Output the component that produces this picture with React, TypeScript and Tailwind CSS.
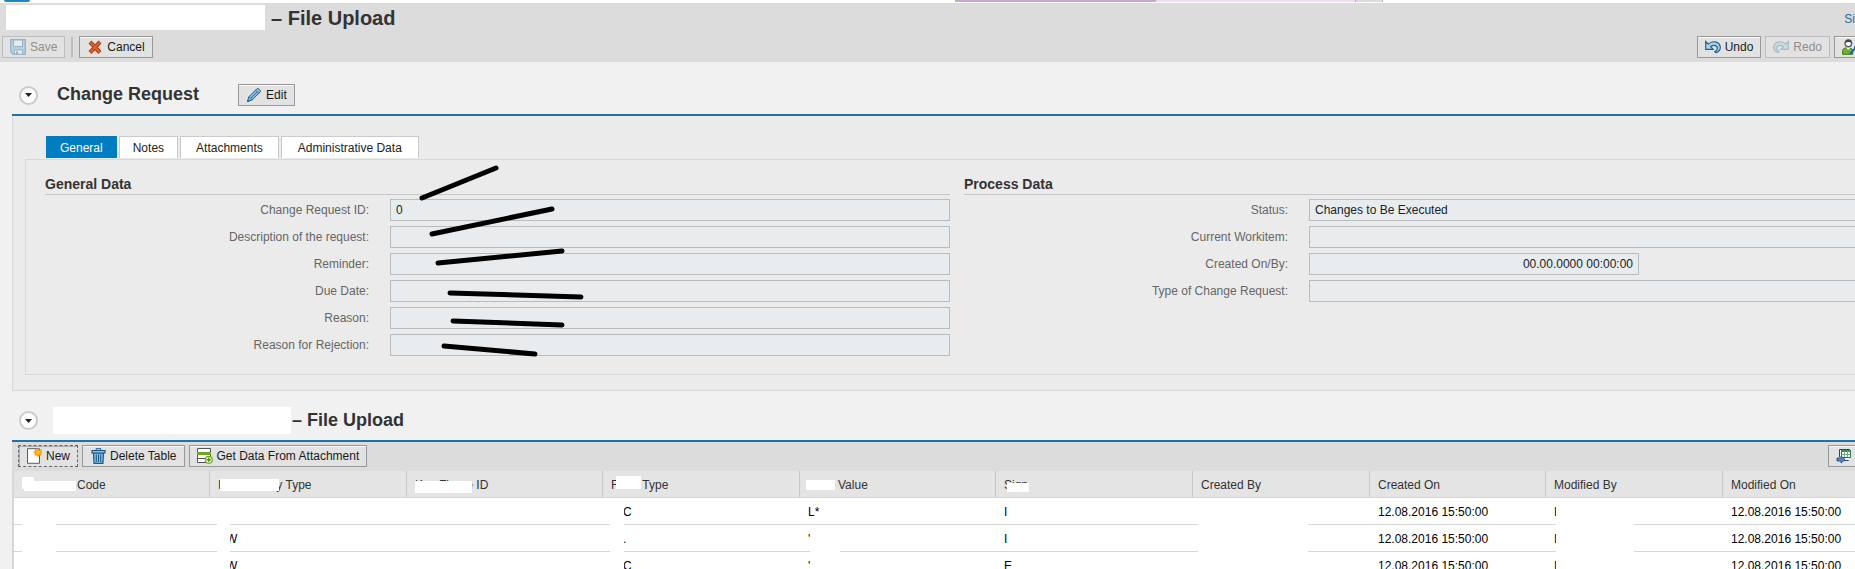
import React from "react";

type IconProps = { children: React.ReactNode };

function Icon({ children }: IconProps) {
  return (
    <svg width="16" height="16" viewBox="0 0 16 16" fill="none" aria-hidden="true" className="shrink-0">
      {children}
    </svg>
  );
}

const SaveIcon = () => (
  <Icon>
    <path d="M.7.7h14.6v14.600H3.200L.7 12.800z" fill="#bccfdb" stroke="#93b3c8" strokeWidth="1.300" />
    <path d="M3.500 1h9v6.500h-9z" fill="#e6eaec" stroke="#93b3c8" />
    <path d="M4.500 11h8v4.300h-8z" fill="#e6eaec" stroke="#93b3c8" />
    <path d="M6 12.500h2V15H6z" fill="#93b3c8" />
  </Icon>
);

const CancelIcon = () => (
  <Icon>
    <path d="M3 3l10 10.500M13 3L3 13.500" stroke="#a93c16" strokeWidth="4" />
    <path d="M3 3l10 10.500M13 3L3 13.500" stroke="#d9602f" strokeWidth="2" />
  </Icon>
);

const EditIcon = () => (
  <Icon>
    <path d="M1.500 14.500l1.300-4.600L11 1.700c1-1 4.300 2 3.300 3.200L6 13z" fill="#8dbbdb" stroke="#1e5f8e" />
    <path d="M9.500 3.200l3.300 3.300M3 9.800L6.200 13M5 11l6-6" stroke="#1e5f8e" strokeWidth=".8" />
    <path d="M1 15l.8-2.600 1.800 1.800z" fill="#1e5f8e" />
  </Icon>
);

const UndoIcon = () => (
  <Icon>
    <path d="M.7 2.500v7.800h7.500L5.700 7.600c3-2.300 7-.8 6.700 1.900-.1 1.500-1.100 2.500-2.500 3.100l1.200 1.100c2.700-.9 4.200-2.700 4.200-5.200C15.300 3.200 8 .6 3.300 5.100z" fill="#b5d2e6" stroke="#1c628f" strokeWidth="1.200" />
  </Icon>
);

const RedoIcon = () => (
  <Icon>
    <path d="M15.300 2.500v7.800H7.800l2.500-2.700c-3-2.300-7-.8-6.700 1.900.1 1.500 1.100 2.500 2.500 3.100l-1.200 1.100C2.200 12.800.7 11 .7 8.500.7 3.200 8 .6 12.700 5.100z" fill="#cddae2" stroke="#a3bccb" strokeWidth="1.200" />
  </Icon>
);

const PersonIcon = () => (
  <Icon>
    <path d="M.6 15.300v-3.500C.6 9.500 3 8.700 5.500 8.700s5.200.8 5.200 3.100v3.500z" fill="#6fb22c" stroke="#3f7d12" />
    <path d="M3.800 8.500l2.500 2.200L8.700 8.500z" fill="#fff" />
    <circle cx="6.300" cy="4.300" r="3.300" fill="#fff" stroke="#555" strokeWidth="1.300" />
    <path d="M3 4C3.300-.3 9.300-.3 9.600 4 7.500 2.600 5.500 2.600 3 4z" fill="#444" />
    <path d="M8 15l5-5.500c-.3-2 1-3 3-2.500" stroke="#1d6ba0" strokeWidth="2" />
  </Icon>
);

const NewIcon = () => (
  <Icon>
    <path d="M1.500.7h12v14.600h-12z" fill="#fff" stroke="#5c5c5c" />
    <path d="M12 0l1.300 1.700 2.200-.6-.3 2.200 1.800 1.300-1.800 1 .3 2.200-2.200-.4L12 9.200l-1.300-1.800-2.200.4.300-2.200L7 4.600l1.800-1.300-.3-2.200 2.200.6z" fill="#f7a30a" />
    <circle cx="12" cy="4.500" r="1.800" fill="#fcc642" />
  </Icon>
);

const TrashIcon = () => (
  <Icon>
    <path d="M3.500 5h10l-.6 10.400H4.100z" fill="#8cc0e2" stroke="#15578a" strokeWidth="1.200" />
    <path d="M2 2.500h13V5H2z" fill="#8cc0e2" stroke="#15578a" strokeWidth="1.200" />
    <path d="M6.200 2V.7h4.600V2M6.300 6.500V14M8.500 6.500V14M10.700 6.500V14" stroke="#15578a" />
  </Icon>
);

const AttachmentDataIcon = () => (
  <Icon>
    <path d="M.5.500h13v14H.500z" fill="#fff" stroke="#555" />
    <path d="M0 4h14v3H0z" fill="#6fa51f" />
    <path d="M0 10.500h8" stroke="#555" />
    <circle cx="11.800" cy="11.800" r="3.500" fill="#fff" stroke="#6fa51f" strokeWidth="1.200" />
    <path d="M11.800 9.500v4.600M9.500 11.800h4.600" stroke="#5b9414" strokeWidth="1.500" />
  </Icon>
);

const ExportIcon = () => (
  <Icon>
    <path d="M3.500 9V1.500h10V3M8 12.500h4.500V10" stroke="#26466f" />
    <path d="M4 2h9v10H4z" fill="#f4f7fa" />
    <path d="M5.500 2.500h9v7h-9z" fill="#fff" stroke="#2d7048" />
    <path d="M5 2h10v2H5z" fill="#3f8a5a" />
    <path d="M5.500 6.500h9M8.500 3v6M11.500 3v6" stroke="#6fae84" />
    <path d="M1 10h4V8l4 3.500L5 15v-2H1z" fill="#5b86c4" stroke="#233f78" strokeWidth=".8" />
  </Icon>
);

type ToolButtonProps = {
  icon: React.ReactNode;
  label?: string;
  name?: string;
  disabled?: boolean;
  focused?: boolean;
};

function ToolButton({ icon, label, name, disabled, focused }: ToolButtonProps) {
  const tone = disabled
    ? "border-[#bdbdbd] text-[#8f8f8f] shadow-none"
    : focused
      ? "border-dashed border-[#666] text-[#1a1a1a] shadow-[inset_1px_1px_0_#aaa]"
      : "border-[#999] text-[#1a1a1a] shadow-[inset_0_1px_0_#f8f8f8]";
  return (
    <button
      type="button"
      disabled={disabled}
      aria-label={name}
      className={`flex h-[22px] shrink-0 items-center gap-1 whitespace-nowrap border bg-[#e2e2e2] px-[7px] text-[12px] leading-4 ${tone}`}
    >
      {icon}
      {label}
    </button>
  );
}

function CollapseButton({ name }: { name: string }) {
  return (
    <button
      type="button"
      aria-label={name}
      className="flex size-[19px] shrink-0 items-center justify-center rounded-full border-2 border-[#cbcbcb] bg-white"
    >
      <svg width="7" height="4" viewBox="0 0 7 4" aria-hidden="true">
        <path d="M0 0h7L3.500 4z" fill="#222" />
      </svg>
    </button>
  );
}

type FieldProps = { id: string; label: string; value?: string; short?: boolean };

function Field({ id, label, value = "", short }: FieldProps) {
  return (
    <div className="flex h-[22px] items-center">
      <label htmlFor={id} className="w-[345px] shrink-0 pr-[21px] text-right text-[#666]">
        {label}
      </label>
      <input
        id={id}
        readOnly
        value={value}
        className={`h-[22px] border border-[#b9bcbe] bg-[#e8ecef] px-[5px] text-[#222] outline-none ${
          short ? "w-[330px] text-right" : "min-w-0 flex-1"
        }`}
      />
    </div>
  );
}

function GroupTitle({ children }: { children: React.ReactNode }) {
  return (
    <h3 className="mb-1 border-b border-[#c6c6c6] text-[14px] font-bold leading-5 text-[#333]">{children}</h3>
  );
}

const strokes = [
  [32, 24, 106, -6],
  [42, 60, 162, 35],
  [48, 89, 172, 77],
  [60, 119, 191, 123],
  [63, 147, 172, 151],
  [54, 172, 145, 180],
];

function PenStrokes() {
  return (
    <svg
      width="220"
      height="200"
      viewBox="0 0 220 200"
      aria-hidden="true"
      className="pointer-events-none absolute left-[345px] top-0 overflow-visible"
    >
      {strokes.map(([x1, y1, x2, y2]) => (
        <line key={y1} x1={x1} y1={y1} x2={x2} y2={y2} stroke="#000" strokeWidth="5" strokeLinecap="round" />
      ))}
    </svg>
  );
}

const tabs = ["General", "Notes", "Attachments", "Administrative Data"];

type Cell = { text?: string; mask?: string; pad?: string };

const wide = "left-[8px] w-[34px]";
const created = "left-[5px] w-[110px]";
const modified = "left-[10px] w-[78px]";
const stamp = "12.08.2016 15:50:00";

const rows: Cell[][] = [
  [
    { mask: wide }, { mask: "left-[7px] w-[13px]" }, {},
    { text: "C", mask: "left-[7px] w-[14px]", pad: "pl-5" },
    { text: "L*" }, { text: "I" }, { mask: created }, { text: stamp },
    { text: "I", mask: modified }, { text: stamp },
  ],
  [
    { mask: wide }, { text: "W", mask: "left-[7px] w-[13px]", pad: "pl-4" }, {},
    { text: ".", mask: "left-[7px] w-[14px]", pad: "pl-5" },
    { text: "'", mask: "left-[10px] w-[30px]" }, { text: "I" }, { mask: created }, { text: stamp },
    { text: "I", mask: modified }, { text: stamp },
  ],
  [
    { mask: wide }, { text: "W", mask: "left-[7px] w-[13px]", pad: "pl-4" }, {},
    { text: "C", mask: "left-[7px] w-[14px]", pad: "pl-5" },
    { text: "'", mask: "left-[10px] w-[30px]" }, { text: "E" }, { mask: created }, { text: stamp },
    { text: "I", mask: modified }, { text: stamp },
  ],
];

function HeaderCell({ children }: { children: React.ReactNode }) {
  return (
    <th
      scope="col"
      className="h-[27px] whitespace-nowrap border-b border-r border-b-[#d6d6d6] border-r-[#c6c6c6] bg-[#e4e4e4] p-0 pl-2 pt-[2px] text-left font-normal text-[#333] last:border-r-0"
    >
      <div className="relative flex h-4 items-center">{children}</div>
    </th>
  );
}

export default function App() {
  return (
    <div className="flex h-screen flex-col overflow-hidden bg-[#f1f1f1] font-['Liberation_Sans',Arial,sans-serif] text-[12px] leading-4">
      <div className="flex h-[3px] shrink-0 bg-white pb-px">
        <div className="ml-1 w-[26px] rounded-b-sm bg-[#2487b8]" />
        <div className="ml-[925px] w-[201px] bg-[#c8a8cf]" />
        <div className="w-[199px] bg-[#f1dcf6]" />
        <div className="w-7 border-x border-[#b5b5b5] bg-[#dcdcdc]" />
      </div>

      <header className="h-[59px] shrink-0 bg-[#dcdcdc]">
        <div className="flex h-[33px] items-start">
          <span className="ml-1.5 mr-1.5 mt-[2px] h-[25px] w-[259px] bg-white" />
          <h1 className="mt-[3px] text-[20px] font-bold leading-6 text-[#333]">– File Upload</h1>
          <a href="#sign" className="ml-auto mt-2 text-[#1f6c9c]">Si</a>
        </div>
        <div className="flex items-center">
          <div className="flex items-center pl-0.5">
            <ToolButton icon={<SaveIcon />} label="Save" disabled />
            <span className="mx-1.5 h-5 w-0.5 bg-[#bdbdbd]" />
            <ToolButton icon={<CancelIcon />} label="Cancel" />
          </div>
          <div className="-mr-[11px] ml-auto flex gap-1">
            <ToolButton icon={<UndoIcon />} label="Undo" />
            <ToolButton icon={<RedoIcon />} label="Redo" disabled />
            <ToolButton icon={<PersonIcon />} name="Personalize" />
          </div>
        </div>
      </header>

      <section className="shrink-0 pl-3">
        <div className="flex h-[52px] items-center pl-[7px] pt-[14px]">
          <CollapseButton name="Collapse change request" />
          <h2 className="ml-[19px] mr-[39px] pb-[2px] text-[18px] font-bold leading-6 text-[#333]">Change Request</h2>
          <ToolButton icon={<EditIcon />} label="Edit" />
        </div>
        <div className="border-t-2 border-[#1f72a6]">
          <div className="border-b border-l border-[#d8d8d8] bg-[#ebebeb] pb-[15px] pl-3 pt-5">
            <div role="tablist" className="flex gap-0.5 pl-[21px]">
              {tabs.map((tab, i) => (
                <button
                  key={tab}
                  type="button"
                  role="tab"
                  aria-selected={i === 0}
                  className={`h-[22px] border border-b-0 ${
                    i === 0 ? "border-[#007cc0] bg-[#007cc0] px-[13px] text-white" : "border-[#cacaca] bg-white text-[#222]"
                  } ${i === 1 ? "px-[13px]" : i === 2 ? "px-[15px]" : i === 3 ? "px-4" : ""}`}
                >
                  {tab}
                </button>
              ))}
            </div>
            <div className="mt-px border-y border-l border-[#d8d8d8] pb-[18px] pl-[19px] pt-[14px]">
              <div className="-mr-[14px] grid grid-cols-2 gap-[14px]">
                <div className="relative">
                  <GroupTitle>General Data</GroupTitle>
                  <div className="flex flex-col gap-[5px]">
                    <Field id="request-id" label="Change Request ID:" value="0" />
                    <Field id="description" label="Description of the request:" />
                    <Field id="reminder" label="Reminder:" />
                    <Field id="due-date" label="Due Date:" />
                    <Field id="reason" label="Reason:" />
                    <Field id="rejection" label="Reason for Rejection:" />
                  </div>
                  <PenStrokes />
                </div>
                <div>
                  <GroupTitle>Process Data</GroupTitle>
                  <div className="flex flex-col gap-[5px]">
                    <Field id="status" label="Status:" value="Changes to Be Executed" />
                    <Field id="workitem" label="Current Workitem:" />
                    <Field id="created" label="Created On/By:" value="00.00.0000 00:00:00" short />
                    <Field id="type" label="Type of Change Request:" />
                  </div>
                </div>
              </div>
            </div>
          </div>
        </div>
      </section>

      <section className="shrink-0 pl-3">
        <div className="flex h-[49px] items-center pl-[7px] pt-[10px]">
          <CollapseButton name="Collapse file upload" />
          <span className="ml-[15px] h-[27px] w-[238px] bg-white" />
          <h2 className="ml-px pb-[2px] text-[18px] font-bold leading-6 text-[#333]">– File Upload</h2>
        </div>
        <div className="flex h-[31px] items-start gap-1 border-t-2 border-[#1f72a6] bg-[#dcdcdc] pl-1.5 pt-[3px]">
          <ToolButton icon={<NewIcon />} label="New" focused />
          <ToolButton icon={<TrashIcon />} label="Delete Table" />
          <ToolButton icon={<AttachmentDataIcon />} label="Get Data From Attachment" />
          <div className="-mr-[5px] ml-auto">
            <ToolButton icon={<ExportIcon />} name="Export" />
          </div>
        </div>
        <div className="border-l-2 border-[#d6d6d6] bg-white">
          <table className="w-full table-fixed border-separate border-spacing-0">
            <colgroup>
              <col className="w-[196px]" />
              <col className="w-[197px]" />
              <col className="w-[196px]" />
              <col className="w-[197px]" />
              <col className="w-[196px]" />
              <col className="w-[197px]" />
              <col className="w-[177px]" />
              <col className="w-[176px]" />
              <col className="w-[177px]" />
              <col />
            </colgroup>
            <thead>
              <tr>
                <HeaderCell>
                  <span className="absolute left-0 top-0 h-3 w-3 bg-white" />
                  <span className="absolute left-[2px] top-1 h-[10px] w-[52px] bg-white" />
                  <span className="pl-[55px]">Code</span>
                </HeaderCell>
                <HeaderCell>
                  <span>I</span>
                  <span className="pl-[55px]">y Type</span>
                  <span className="absolute left-[2px] top-[2px] h-3 w-[59px] bg-white" />
                </HeaderCell>
                <HeaderCell>
                  <span>Key Figure ID</span>
                  <span className="absolute left-0 top-1 h-3 w-[57px] bg-white" />
                </HeaderCell>
                <HeaderCell>
                  <span>F</span>
                  <span className="pl-6">Type</span>
                  <span className="absolute -top-px left-[5px] h-[13px] w-[25px] bg-white" />
                </HeaderCell>
                <HeaderCell>
                  <span className="-ml-0.5 mr-[3px] h-[10px] w-[29px] bg-white" />
                  <span>Value</span>
                </HeaderCell>
                <HeaderCell>
                  <span>Sign</span>
                  <span className="absolute left-[3px] top-[6px] h-[9px] w-[22px] bg-white" />
                </HeaderCell>
                <HeaderCell>Created By</HeaderCell>
                <HeaderCell>Created On</HeaderCell>
                <HeaderCell>Modified By</HeaderCell>
                <HeaderCell>Modified On</HeaderCell>
              </tr>
            </thead>
            <tbody>
              {rows.map((row, r) => (
                <tr key={r}>
                  {row.map((cell, c) => (
                    <td
                      key={c}
                      className={`relative h-[27px] whitespace-nowrap border-b border-[#d6d6d6] p-0 pt-[2px] text-black ${cell.pad ?? "pl-2"}`}
                    >
                      {cell.text}
                      {cell.mask && <span className={`absolute -bottom-px top-0 bg-white ${cell.mask}`} />}
                    </td>
                  ))}
                </tr>
              ))}
            </tbody>
          </table>
        </div>
      </section>
    </div>
  );
}
